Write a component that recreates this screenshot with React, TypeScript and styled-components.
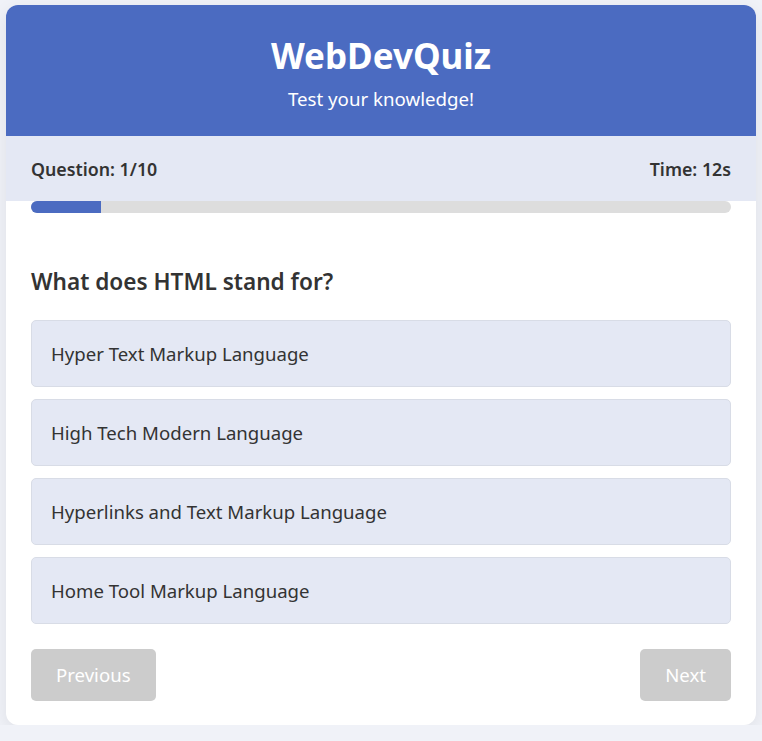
import { FC, useState } from "react";
import styled, { createGlobalStyle } from "styled-components";

const GlobalStyle = createGlobalStyle`
  * {
    box-sizing: border-box;
  }

  body {
    margin: 0;
    background-color: #f0f2f8;
    font-family: "Segoe UI", "Noto Sans", sans-serif;
    color: #333333;
  }
`;

const Card = styled.div`
  max-width: 750px;
  margin: 5px auto 0;
  background-color: #ffffff;
  border-radius: 12px;
  box-shadow: 0 5px 18px rgba(0, 0, 0, 0.08);
  overflow: hidden;
`;

const Header = styled.header`
  background-color: #4b6bc1;
  color: #ffffff;
  text-align: center;
  padding: 30px 20px 25px;
`;

const Title = styled.h1`
  margin: 0;
  font-size: 35px;
  font-weight: 700;
  line-height: 1.2;
`;

const Subtitle = styled.p`
  margin: 10px 0 0;
  font-size: 18.7px;
  line-height: 1.3;
`;

const StatusBar = styled.div`
  display: flex;
  justify-content: space-between;
  align-items: center;
  height: 65px;
  padding: 0 25px;
  background-color: #e4e8f4;
  font-size: 17.8px;
  font-weight: 600;
`;

const Body = styled.div`
  padding: 0 25px 24px;
`;

const Track = styled.div`
  height: 12px;
  border-radius: 6px;
  background-color: #dddddd;
  overflow: hidden;
`;

const Fill = styled.div`
  height: 100%;
  background-color: #4b6bc1;
`;

const Question = styled.h2`
  margin: 54px 0 23px;
  font-size: 22.6px;
  font-weight: 600;
  line-height: 1.3;
`;

const Options = styled.div`
  display: flex;
  flex-direction: column;
  gap: 12px;
`;

const Option = styled.button<{ $selected: boolean }>`
  display: block;
  width: 100%;
  height: 67px;
  padding: 0 19px;
  text-align: left;
  font-family: inherit;
  font-size: 18.6px;
  color: #333333;
  background-color: ${({ $selected }) => ($selected ? "#d3dcf4" : "#e4e8f4")};
  border: 1px solid #d8dce6;
  border-radius: 5px;
  cursor: pointer;
`;

const Nav = styled.div`
  display: flex;
  justify-content: space-between;
  margin-top: 25px;
`;

const NavButton = styled.button`
  height: 52px;
  padding: 0 25px;
  border: none;
  border-radius: 5px;
  background-color: #cccccc;
  color: #ffffff;
  font-family: inherit;
  font-size: 18.6px;
  cursor: not-allowed;
`;

const options = [
  "Hyper Text Markup Language",
  "High Tech Modern Language",
  "Hyperlinks and Text Markup Language",
  "Home Tool Markup Language",
];

const App: FC = () => {
  const [selected, setSelected] = useState<number | null>(null);
  const current = 1;
  const total = 10;

  return (
    <>
      <GlobalStyle />
      <Card>
        <Header>
          <Title>WebDevQuiz</Title>
          <Subtitle>Test your knowledge!</Subtitle>
        </Header>
        <StatusBar>
          <span>
            Question: {current}/{total}
          </span>
          <span>Time: 12s</span>
        </StatusBar>
        <Body>
          <Track>
            <Fill style={{ width: `${(current / total) * 100}%` }} />
          </Track>
          <Question>What does HTML stand for?</Question>
          <Options>
            {options.map((text, i) => (
              <Option
                key={text}
                $selected={selected === i}
                onClick={() => setSelected(i)}
              >
                {text}
              </Option>
            ))}
          </Options>
          <Nav>
            <NavButton disabled>Previous</NavButton>
            <NavButton disabled>Next</NavButton>
          </Nav>
        </Body>
      </Card>
    </>
  );
};

export default App;
